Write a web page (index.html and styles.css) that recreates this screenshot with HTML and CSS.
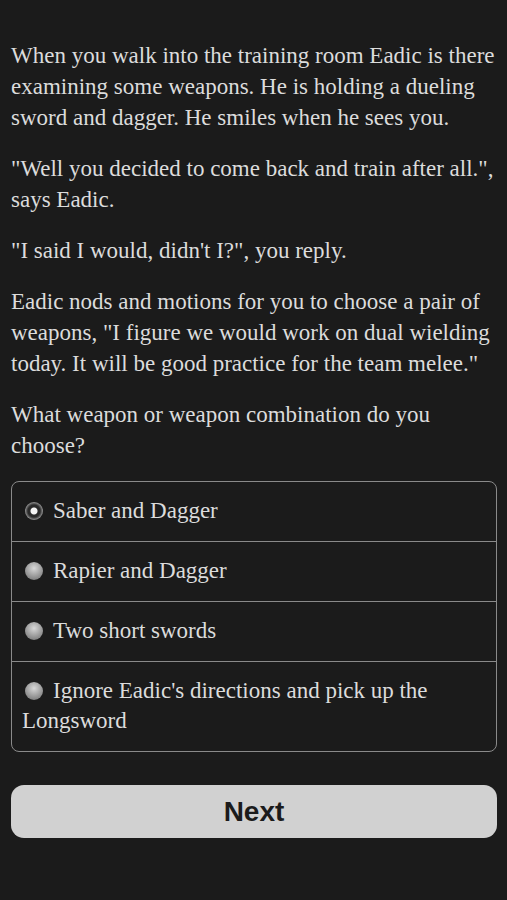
FILE: index.html
```html
<!DOCTYPE html>
<html lang="en">
<head>
	<meta charset="UTF-8">
	<title>Training</title>
	<link rel="stylesheet" href="styles.css">
</head>
<body>
	<div class="page">
		<div class="story">
			<p>When you walk into the training room Eadic is there examining some weapons. He is holding a dueling sword and dagger. He smiles when he sees you.</p>
			<p>"Well you decided to come back and train after all.", says Eadic.</p>
			<p>"I said I would, didn't I?", you reply.</p>
			<p>Eadic nods and motions for you to choose a pair of weapons, "I figure we would work on dual wielding today. It will be good practice for the team melee."</p>
			<p>What weapon or weapon combination do you choose?</p>
		</div>
		<ul class="choices">
			<li class="choice"><span class="radio on"></span>Saber and Dagger</li>
			<li class="choice"><span class="radio"></span>Rapier and Dagger</li>
			<li class="choice"><span class="radio"></span>Two short swords</li>
			<li class="choice"><span class="radio"></span>Ignore Eadic's directions and pick up the Longsword</li>
		</ul>
		<button class="next">Next</button>
	</div>
</body>
</html>
```

FILE: styles.css
```css
*{ margin:0; padding:0; list-style:none; box-sizing:border-box;}
html,body{ background:#1b1b1b;}
body{ font-family:"Liberation Serif", "Times New Roman", serif; color:#dcdcdc;}
.page{ padding:40px 10px 20px 11px;}
.story p{ font-size:23px; line-height:31px; margin-bottom:20px;}
.story p:last-child{ margin-bottom:0;}
.choices{ border:1px solid #8a8a8a; border-radius:8px; margin-top:20px;}
.choice{ font-size:23px; line-height:30px; padding:14px 10px 15px 10px; border-top:1px solid #8a8a8a;}
.choice:first-child{ border-top:0;}
.radio{ display:inline-block; width:18px; height:18px; border-radius:50%; vertical-align:-2px; margin:0 10px 0 3px; background:radial-gradient(circle at 50% 35%, #d8d8d8 0%, #9a9a9a 55%, #6a6a6a 100%);}
.radio.on{ background:radial-gradient(circle, #f4f4f4 0 3px, #2a2a2a 4px 6px, #4a4a4a 7px, #9a9a9a 9px);}
.next{ display:block; width:100%; height:53px; margin-top:33px; border:0; border-radius:13px; background:#d1d1d1; color:#1b1b1b; font-family:"Liberation Sans", Arial, sans-serif; font-weight:bold; font-size:28px;}
```
